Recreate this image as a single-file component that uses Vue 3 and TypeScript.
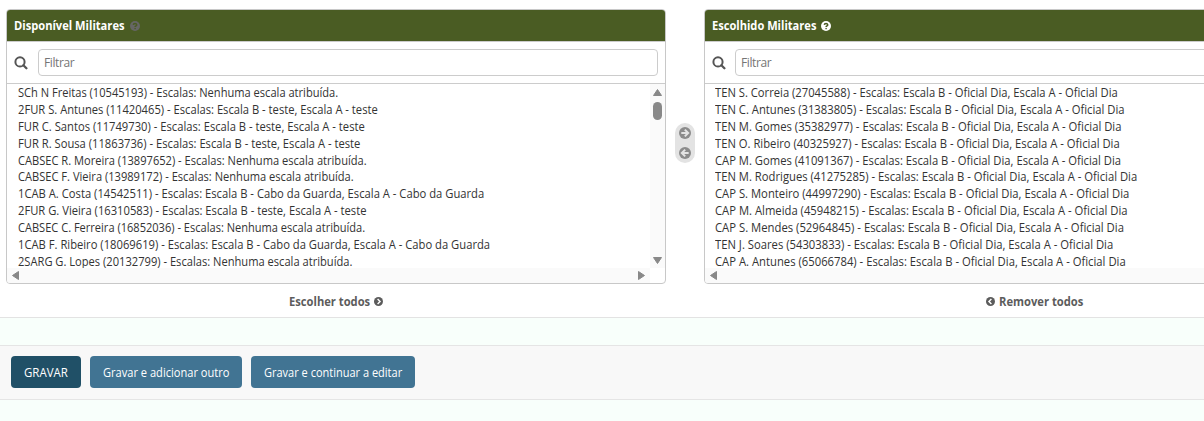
<script setup lang="ts">
interface Row {
  text: string
  width: number
}
interface Panel {
  title: string
  titleWidth: number
  side: 'available' | 'chosen'
  action: string
  actionWidth: number
  rows: Row[]
}

// Condenses a label horizontally so that it takes the given width.
const vFit = {
  mounted(el: HTMLElement, binding: { value: number }) {
    const natural = el.offsetWidth
    el.style.transform = `scaleX(${binding.value / natural})`
    el.style.marginRight = `${binding.value - natural}px`
  },
}

const none = 'Escalas: Nenhuma escala atribuída.'
const teste = 'Escalas: Escala B - teste, Escala A - teste'
const cabo = 'Escalas: Escala B - Cabo da Guarda, Escala A - Cabo da Guarda'
const oficial = 'Escalas: Escala B - Oficial Dia, Escala A - Oficial Dia'

const row = (name: string, scale: string, width: number): Row => ({ text: `${name} - ${scale}`, width })

const panels: Panel[] = [
  {
    title: 'Disponível Militares',
    titleWidth: 110.5,
    side: 'available',
    action: 'Escolher todos',
    actionWidth: 81,
    rows: [
      row('SCh N Freitas (10545193)', none, 320),
      row('2FUR S. Antunes (11420465)', teste, 360),
      row('FUR C. Santos (11749730)', teste, 346.5),
      row('FUR R. Sousa (11863736)', teste, 342.5),
      row('CABSEC R. Moreira (13897652)', none, 349),
      row('CABSEC F. Vieira (13989172)', none, 336),
      row('1CAB A. Costa (14542511)', cabo, 466),
      row('2FUR G. Vieira (16310583)', teste, 348.5),
      row('CABSEC C. Ferreira (16852036)', none, 347.5),
      row('1CAB F. Ribeiro (18069619)', cabo, 472),
      row('2SARG G. Lopes (20132799)', none, 334),
    ],
  },
  {
    title: 'Escolhido Militares',
    titleWidth: 104.5,
    side: 'chosen',
    action: 'Remover todos',
    actionWidth: 84,
    rows: [
      row('TEN S. Correia (27045588)', oficial, 403),
      row('TEN C. Antunes (31383805)', oficial, 409.5),
      row('TEN M. Gomes (35382977)', oficial, 406),
      row('TEN O. Ribeiro (40325927)', oficial, 404.5),
      row('CAP M. Gomes (41091367)', oficial, 406.5),
      row('TEN M. Rodrigues (41275285)', oficial, 422),
      row('CAP S. Monteiro (44997290)', oficial, 414),
      row('CAP M. Almeida (45948215)', oficial, 413),
      row('CAP S. Mendes (52964845)', oficial, 408.5),
      row('TEN J. Soares (54303833)', oficial, 398),
      row('CAP A. Antunes (65066784)', oficial, 410.5),
    ],
  },
]

const buttons = [
  { label: 'GRAVAR', kind: 'save', width: 44 },
  { label: 'Gravar e adicionar outro', kind: 'another', width: 126.5 },
  { label: 'Gravar e continuar a editar', kind: 'continue', width: 138.5 },
]
</script>

<template>
  <main class="page">
    <section class="selector">
      <div v-for="panel in panels" :key="panel.side" class="column" :class="panel.side">
        <div class="panel">
          <h2>
            <span v-fit="panel.titleWidth" class="fit">{{ panel.title }}</span>
            <svg class="help" viewBox="0 0 10 10">
              <circle cx="5" cy="5" r="5" fill="currentColor" />
              <path class="mark" d="M3.3 3.9C3.4 2 6.7 2 6.7 3.9C6.7 5 5.1 4.9 5.1 6" />
              <rect class="dot" x="4.4" y="6.9" width="1.4" height="1.3" />
            </svg>
          </h2>
          <div class="filter">
            <svg class="search" viewBox="0 0 14 14">
              <circle cx="6" cy="5.9" r="4.6" fill="none" stroke="#555" stroke-width="2" />
              <path d="M9.4 9.3l3 3" stroke="#555" stroke-width="2.3" stroke-linecap="round" />
            </svg>
            <input type="text" placeholder="Filtrar" />
          </div>
          <div class="listbox">
            <ul>
              <li v-for="item in panel.rows" :key="item.text">
                <span v-fit="item.width" class="fit">{{ item.text }}</span>
              </li>
            </ul>
            <div v-if="panel.side === 'available'" class="vbar">
              <svg width="11" height="9" viewBox="0 0 11 9"><path d="M5.5 1.5L9.5 7.5H1.5Z" /></svg>
              <i class="thumb"></i>
              <svg class="down" width="11" height="9" viewBox="0 0 11 9"><path d="M1.5 1.5H9.5L5.5 7.5Z" /></svg>
            </div>
            <div class="hbar">
              <svg width="9" height="11" viewBox="0 0 9 11"><path d="M1.5 5.5L7.5 1.5V9.5Z" /></svg>
              <svg width="9" height="11" viewBox="0 0 9 11"><path d="M1.5 1.5L7.5 5.5L1.5 9.5Z" /></svg>
            </div>
          </div>
        </div>
        <a class="all">
          <span v-fit="panel.actionWidth" class="fit">{{ panel.action }}</span>
          <svg viewBox="0 0 10 10">
            <circle cx="5" cy="5" r="5" fill="#5c5c5c" />
            <path
              :d="panel.side === 'available' ? 'M4 2.3L6.7 5L4 7.7' : 'M6 2.3L3.3 5L6 7.7'"
              fill="none" stroke="#fff" stroke-width="1.6"
            />
          </svg>
        </a>
      </div>
      <div class="chooser">
        <svg viewBox="0 0 12 12">
          <circle cx="6" cy="6" r="6" fill="#8b8b8b" />
          <path d="M2.3 6H9M5.8 2.6L9.2 6L5.8 9.4" fill="none" stroke="#e3e3e3" stroke-width="2" />
        </svg>
        <svg viewBox="0 0 12 12">
          <circle cx="6" cy="6" r="6" fill="#8b8b8b" />
          <path d="M9.7 6H3M6.2 2.6L2.8 6L6.2 9.4" fill="none" stroke="#e3e3e3" stroke-width="2" />
        </svg>
      </div>
    </section>
    <footer class="submit">
      <button v-for="button in buttons" :key="button.kind" :class="button.kind">
        <span v-fit="button.width" class="fit">{{ button.label }}</span>
      </button>
    </footer>
  </main>
</template>

<style>
body {
  overflow: hidden;
}
</style>

<style scoped>
* {
  box-sizing: border-box;
}
svg {
  display: block;
  flex: none;
}
.page {
  height: 421px;
  overflow: hidden;
  background: #f8fffb;
  font-family: "Open Sans", "Noto Sans", sans-serif;
  font-size: 12px;
  color: #333;
}
.fit {
  display: inline-block;
  flex: none;
  white-space: nowrap;
  transform-origin: 0 50%;
}
.selector {
  display: grid;
  grid-template-columns: 660px 18px 660px;
  column-gap: 10px;
  height: 318px;
  padding: 9px 0 0 6px;
  border-bottom: 1px solid #e3e3e3;
  background: #fff;
}
.column {
  grid-row: 1;
}
.available {
  grid-column: 1;
}
.chosen {
  grid-column: 3;
}
.panel {
  height: 275px;
  border: 1px solid #c8c8c8;
  border-radius: 4px;
  overflow: hidden;
}
h2 {
  display: flex;
  align-items: center;
  gap: 5px;
  height: 32px;
  margin: 0;
  padding: 0 7px;
  border-bottom: 1px solid #ccc;
  background: #4a5c23;
  color: #fff;
  font-size: 12px;
  font-weight: 700;
}
.help {
  width: 10px;
  height: 10px;
  margin-top: 1px;
}
.mark {
  fill: none;
  stroke: #4a5c23;
  stroke-width: 1.5;
}
.dot {
  fill: #4a5c23;
}
.available .help {
  color: #666664;
}
.filter {
  display: flex;
  align-items: center;
  gap: 10px;
  height: 42px;
  padding: 0 7px;
  border-bottom: 1px solid #ccc;
}
.search {
  width: 14px;
  height: 14px;
}
input {
  flex: 1;
  min-width: 0;
  height: 27px;
  padding: 0 5px;
  border: 1px solid #ccc;
  border-radius: 4px;
  background: #fff;
  font: inherit;
  letter-spacing: -0.4px;
}
.chosen .filter {
  gap: 9px;
}
input::placeholder {
  color: #757575;
  opacity: 1;
}
.listbox {
  display: grid;
  grid-template: 184px 15px / 1fr 15px;
}
ul {
  grid-area: 1 / 1 / 2 / 3;
  margin: 0;
  padding: 0 0 0 11px;
  list-style: none;
  overflow: hidden;
}
.chosen ul {
  padding-left: 10px;
}
li {
  height: 16.9px;
  line-height: 17px;
  white-space: nowrap;
}
.vbar {
  grid-area: 1 / 2;
  display: flex;
  flex-direction: column;
  align-items: center;
  padding: 4px 0 3px;
  background: #fafafa;
}
.listbox path {
  fill: #888;
  stroke: #888;
  stroke-width: 1;
  stroke-linejoin: round;
}
.thumb {
  width: 9px;
  height: 18px;
  margin-top: 5px;
  border-radius: 5px;
  background: #888;
}
.down {
  margin-top: auto;
}
.hbar {
  grid-area: 2 / 1;
  display: flex;
  align-items: center;
  justify-content: space-between;
  padding: 0 4px;
  background: #fafafa;
}
.chosen .hbar {
  grid-column: 1 / 3;
}
.all {
  display: flex;
  align-items: center;
  justify-content: center;
  gap: 4px;
  height: 33px;
  padding-top: 1px;
  color: #5c5c5c;
  font-size: 12px;
  font-weight: 700;
}
.all svg {
  width: 9px;
  height: 9px;
}
.chosen .all {
  flex-direction: row-reverse;
  padding-left: 2px;
}
.chooser {
  grid-area: 1 / 2;
  display: flex;
  flex-direction: column;
  align-items: center;
  justify-content: space-between;
  width: 20px;
  height: 40px;
  margin: 114px 0 0 -1px;
  padding: 4px;
  border-radius: 10px;
  background: #e3e3e3;
}
.chooser svg {
  width: 12px;
  height: 12px;
}
.submit {
  display: flex;
  gap: 9px;
  height: 55px;
  margin-top: 27px;
  padding: 10px 11px;
  border: solid #e5e5e5;
  border-width: 1px 0;
  background: #f8f8f8;
}
button {
  display: flex;
  align-items: center;
  height: 32px;
  padding: 0 13px;
  border: 0;
  border-radius: 4px;
  background: #417493;
  color: #fff;
  font: inherit;
}
.save {
  width: 70px;
  background: #205067;
}
.another {
  width: 152px;
}
.continue {
  width: 164px;
}
</style>
